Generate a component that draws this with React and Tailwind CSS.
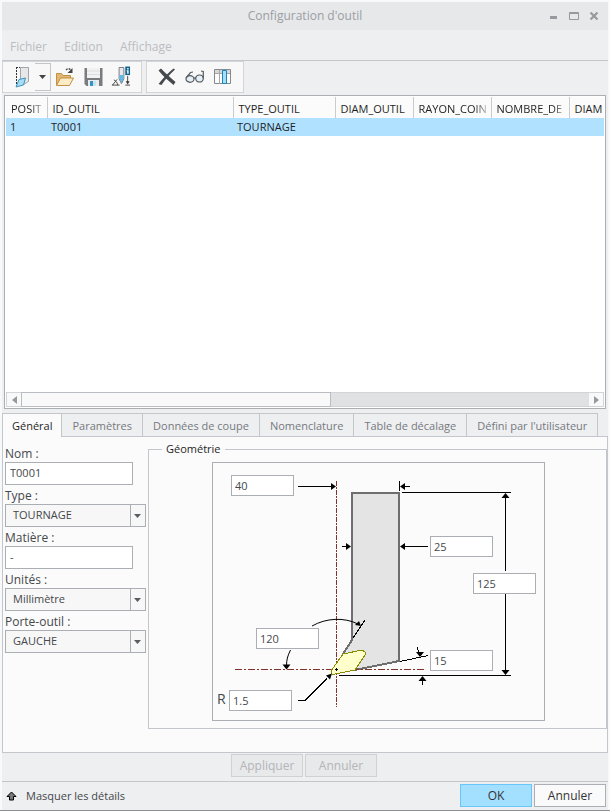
import { useState } from "react";

const MENUS = ["Fichier", "Edition", "Affichage"];

const COLUMNS = [
  { label: "POSIT", width: "w-[41px]", faded: true },
  { label: "ID_OUTIL", width: "w-[186px]" },
  { label: "TYPE_OUTIL", width: "w-[102px]" },
  { label: "DIAM_OUTIL", width: "w-[78px]" },
  { label: "RAYON_COIN", width: "w-[78px]", faded: true },
  { label: "NOMBRE_DE", width: "w-[78px]", faded: true },
  { label: "DIAM", width: "" },
];

const TOOLS = [["1", "T0001", "TOURNAGE", "", "", "", ""]];

const TABS = [
  "Général",
  "Paramètres",
  "Données de coupe",
  "Nomenclature",
  "Table de décalage",
  "Défini par l'utilisateur",
];

const DIMENSIONS = [
  { id: "offset", label: "Décalage", value: "40", place: "left-[18px] top-[12px]" },
  { id: "width", label: "Largeur", value: "25", place: "left-[217px] top-[73px]" },
  { id: "length", label: "Longueur", value: "125", place: "left-[260px] top-[110px]" },
  { id: "side", label: "Angle latéral", value: "120", place: "left-[43px] top-[165px]" },
  { id: "end", label: "Angle de face", value: "15", place: "left-[217px] top-[187px]" },
  { id: "radius", label: "Rayon", value: "1.5", place: "left-[16px] top-[227px]" },
];

function NewToolIcon() {
  return (
    <svg width="16" height="22" viewBox="0 0 16 22" fill="none">
      <path d="M5.500 1.500h8v14l-5 3-3-1z" fill="#e6e7e8" stroke="#a2a5a8" />
      <path d="M1.500 1v19M1 1.500h4" stroke="#333" strokeDasharray="2 1" />
      <path d="M4 13.500l6.500-1.500-2 7-7.500 2z" fill="#a9dcf5" stroke="#3a93bd" />
    </svg>
  );
}

function OpenIcon() {
  return (
    <svg width="20" height="20" viewBox="0 0 20 20" fill="none">
      <path d="M1.500 18V6.500h5l1.500 2h7.500V11" fill="#e0b873" stroke="#c29143" />
      <path d="M1.500 18.500l4-7.500h13l-4 7.500z" fill="#fdebc6" stroke="#c29143" />
      <path d="M11 3c2-2 4-1.500 5 .5" stroke="#444" strokeWidth="1.300" strokeDasharray="2 1" />
      <path d="M17.500 1v5h-5z" fill="#444" />
    </svg>
  );
}

function SaveIcon() {
  return (
    <svg width="19" height="20" viewBox="0 0 19 20" fill="none">
      <path d="M.5 1h18v18h-16l-2-2z" fill="#797b7e" />
      <path d="M3 1h13v10H3z" fill="#f1f2f2" />
      <path d="M3 4h13M3 7.500h13" stroke="#dcdddf" />
      <path d="M4 13h11v6H4z" fill="#e9edf0" />
      <path d="M6 14h3v5H6z" fill="#3b93bb" />
      <path d="M9 14h3v5H9z" fill="#c4e5f4" />
    </svg>
  );
}

function ProbeIcon() {
  return (
    <svg width="21" height="22" viewBox="0 0 21 22" fill="none">
      <path d="M8.500 1v12l2.500 5 2.500-5V1z" fill="#e6e8ea" stroke="#74787c" />
      <path d="M9 9h4v4l-2 4-2-4z" fill="#59bbe6" />
      <path d="M15 0h5v9h-5z" fill="#12638c" />
      <path d="M17 1.500h1.500V3H17zM16.500 4h2v3.500H17V5h-.5z" fill="#fff" />
      <path d="M17.500 10v7M15 19.500h5M1 19.500h8M1.500 19.500l5-6M3 14c2 1 4 3 4 5.500" stroke="#444" />
      <path d="M15.500 15.500h4l-2 3.500z" fill="#333" />
    </svg>
  );
}

function DeleteIcon() {
  return (
    <svg width="18" height="18" viewBox="0 0 18 18" fill="none">
      <path d="M.5 2.500L3 .5c4 4 9 9 14.500 13.500L15.500 17C10 12.500 5 8 .5 2.500z" fill="#46494c" />
      <path d="M15.500.5l1.500 1C11.500 6.500 7.500 11 3.500 17l-3-1C5 10 10 5 15.500.5z" fill="#46494c" />
    </svg>
  );
}

function GlassesIcon() {
  return (
    <svg width="20" height="14" viewBox="0 0 20 14" fill="none" stroke="#55585b" strokeWidth="1.200">
      <ellipse cx="5" cy="9" rx="4" ry="3.300" fill="#e3f1f7" />
      <ellipse cx="14.500" cy="8.500" rx="3.800" ry="3.500" fill="#e3f1f7" />
      <path d="M8.800 8.500c.5-1 1.300-1 2 0M1 8l4.500-5.500 2.500-.5M18.300 8V1.500L16 1" />
    </svg>
  );
}

function ColumnsIcon() {
  return (
    <svg width="18" height="16" viewBox="0 0 18 16" fill="none">
      <path d="M.5.5h16v14H.5z" fill="#fff" stroke="#85888c" />
      <path d="M1 2.500h15" stroke="#d5d7d9" strokeWidth="3" />
      <path d="M5.500 1v14M1 4.500h15" stroke="#a4a7aa" />
      <path d="M8.500 1.500h4v13h-4z" fill="#a4def8" stroke="#1c86b7" />
    </svg>
  );
}

function IconButton({ label, className = "", children }) {
  return (
    <button type="button" aria-label={label} className={`flex h-7 items-center justify-center ${className}`}>
      {children}
    </button>
  );
}

function TitleBar() {
  return (
    <header className="flex h-7 items-center justify-end bg-[#e6e8ea] text-[#9b9ea2]">
      <h1 className="flex-1 pl-[62px] text-center">Configuration d'outil</h1>
      <div className="flex gap-1 pr-1.5">
        <button type="button" aria-label="Réduire" className="flex h-4 w-4 items-center justify-center">
          <svg width="10" height="10" viewBox="0 0 10 10"><path d="M1 5h7v3H1z" fill="#96999d" /></svg>
        </button>
        <button type="button" aria-label="Agrandir" className="flex h-4 w-4 items-center justify-center">
          <svg width="10" height="8" viewBox="0 0 10 8"><path d="M.5.5h9v7h-9zM0 1.500h10" fill="none" stroke="#96999d" /></svg>
        </button>
        <button type="button" aria-label="Fermer" className="flex h-4 w-4 items-center justify-center">
          <svg width="8" height="8" viewBox="0 0 8 8"><path d="M.5.5l7 7M7.500.5l-7 7" stroke="#96999d" strokeWidth="2.200" /></svg>
        </button>
      </div>
    </header>
  );
}

function Toolbar() {
  return (
    <div className="flex gap-1">
      <div className="flex h-8 w-[140px] items-center border border-[#d2d4d6] bg-[#f8f8f8] pl-3">
        <IconButton label="Nouvel outil" className="w-4">
          <NewToolIcon />
        </IconButton>
        <IconButton label="Types d'outil" className="ml-1 w-4 border border-l-0 border-[#c3c6c9]">
          <svg width="7" height="4" viewBox="0 0 7 4"><path d="M0 0h7L3.500 4z" fill="#444" /></svg>
        </IconButton>
        <IconButton label="Ouvrir" className="ml-1 w-5">
          <OpenIcon />
        </IconButton>
        <IconButton label="Enregistrer" className="ml-2 w-5">
          <SaveIcon />
        </IconButton>
        <IconButton label="Informations" className="ml-2 w-5">
          <ProbeIcon />
        </IconButton>
      </div>
      <div className="flex h-8 w-[98px] items-center gap-2 border border-[#d2d4d6] bg-[#f8f8f8] pl-2.5">
        <IconButton label="Supprimer" className="w-5">
          <DeleteIcon />
        </IconButton>
        <IconButton label="Aperçu" className="w-5">
          <GlassesIcon />
        </IconButton>
        <IconButton label="Colonnes" className="w-5">
          <ColumnsIcon />
        </IconButton>
      </div>
    </div>
  );
}

function ToolTable() {
  return (
    <div className="mx-0.5 mt-0.5 flex min-h-[314px] flex-1 flex-col border border-[#abaeb2] bg-white p-px text-[11px]">
      <div className="flex-1">
        <table className="w-full table-fixed border-collapse">
          <thead>
            <tr className="h-[21px] bg-[#fbfbfb] text-left text-[#1f1f1f]">
              {COLUMNS.map((col) => (
                <th
                  key={col.label}
                  scope="col"
                  className={`${col.width} border-r border-[#c9cccf] pl-[5px] pt-0.5 font-normal whitespace-nowrap last:border-r-0`}
                >
                  <span
                    className={
                      col.faded
                        ? "block [mask-image:linear-gradient(to_right,black_calc(100%-16px),transparent)]"
                        : "block"
                    }
                  >
                    {col.label}
                  </span>
                </th>
              ))}
            </tr>
          </thead>
          <tbody>
            {TOOLS.map((row) => (
              <tr key={row[1]} className="h-[18px] bg-[#b0e2ff] text-[#1f1f1f]">
                {row.map((cell, i) => (
                  <td key={i} className="py-0 pl-1 leading-4">{cell}</td>
                ))}
              </tr>
            ))}
          </tbody>
        </table>
      </div>
      <div className="flex h-[15px] border border-[#d2d4d6] bg-[#dfe1e3]">
        <button type="button" aria-label="Défiler à gauche" className="flex w-[14px] items-center justify-center bg-[#f9f9f9]">
          <svg width="5" height="8" viewBox="0 0 5 8"><path d="M5 0v8L0 4z" fill="#96999d" /></svg>
        </button>
        <div className="-my-px w-[52%] border border-[#b9bcc0] bg-[#f9f9f9]" />
        <button type="button" aria-label="Défiler à droite" className="ml-auto flex w-[14px] items-center justify-center bg-[#f9f9f9]">
          <svg width="5" height="8" viewBox="0 0 5 8"><path d="M0 0v8l5-4z" fill="#96999d" /></svg>
        </button>
      </div>
    </div>
  );
}

function TextField({ id, label, value }) {
  return (
    <div>
      <label htmlFor={id} className="block h-[19px] leading-[22px]">{label}</label>
      <input
        id={id}
        type="text"
        defaultValue={value}
        className="block h-[23px] w-32 border border-[#abaeb2] bg-white px-1 pb-0.5 text-[11px] outline-none"
      />
    </div>
  );
}

function SelectField({ id, label, value }) {
  return (
    <div>
      <label htmlFor={id} className="block h-[19px] leading-[22px]">{label}</label>
      <div className="relative">
        <select
          id={id}
          className="block h-[23px] w-full appearance-none border border-[#abaeb2] bg-[#f7f7f7] pb-0.5 pl-[7px] text-[11px] outline-none"
        >
          <option>{value}</option>
        </select>
        <span className="pointer-events-none absolute inset-y-0 right-0 flex w-4 items-center justify-center border border-[#abaeb2]">
          <svg width="8" height="4" viewBox="0 0 8 4"><path d="M0 0h7L3.500 4z" fill="#5a5d60" /></svg>
        </span>
      </div>
    </div>
  );
}

// Drawing units are pixels; every dimension box sits on its leader line.
function ToolDrawing() {
  return (
    <div className="relative h-[259px] w-[333px] border border-[#abaeb2]">
      <svg
        width="331"
        height="257"
        viewBox="213 463 331 257"
        fill="none"
        shapeRendering="crispEdges"
        className="absolute inset-0"
      >
        {/* Shank */}
        <path d="M352 493h47v168l-44 9-12-16 9-14z" fill="#e4e4e4" />
        <path d="M343 654l9-14V493h47v168l-44 9" stroke="#6e6e6e" strokeWidth="2" />

        {/* Axes */}
        <path d="M336.500 481v226" stroke="#85302a" strokeDasharray="5 1 2 1" />
        <path d="M235 669.500h190" stroke="#85302a" strokeDasharray="7 2 2 2" />

        {/* Insert */}
        <path
          d="M343 654l19-4 3 2v3l-10 15-20 4h-3l-1-3z"
          fill="#ffffcc"
          stroke="#8a8a00"
        />
        <path d="M336 668h1v3h-1zM335 669h3v1h-3z" fill="#000" />

        {/* Leader lines */}
        <g stroke="#000">
          <path d="M298 486.500h34M399.500 481v10M404 486.500h6" />
          <path d="M402 492.500h109M505.500 496v75M505.500 594v78M339 675.500h172" />
          <path d="M342 546.500h6M404 546.500h24" />
          <path d="M298 700.500h7l22-22" />
          <path d="M400 661.500l28-6" />
          <path d="M417 647l2 6M422.500 680v5" />
          <path d="M353 638l12-18" />
          <path d="M312 626c14-8 32-9 46-2M290.500 650c-3 6-4 10-4 16" shapeRendering="auto" />
        </g>

        {/* Arrow heads */}
        <g fill="#000" shapeRendering="auto">
          <path d="M336 486.500l-5-3.500v7zM400 486.500l5-3.500v7z" />
          <path d="M351 546.500l-5-3.500v7zM400 546.500l5-3.500v7z" />
          <path d="M505.500 493l4 5h-8zM505.500 675l4-5h-8z" />
          <path d="M286.500 669.500l4-5h-8zM361 626l-2-5-4 4z" />
          <path d="M332 673.500l-2 6-4-4zM420 657l4-5h-8zM422.500 676l4 5h-8z" />
        </g>
      </svg>

      {DIMENSIONS.map((dim) => (
        <input
          key={dim.id}
          type="text"
          aria-label={dim.label}
          defaultValue={dim.value}
          className={`absolute h-[21px] w-[63px] border border-[#abaeb2] bg-white px-[3px] text-[11px] outline-none ${dim.place}`}
        />
      ))}
      <span className="absolute left-1 top-[226px] text-sm leading-5">R</span>
    </div>
  );
}

function GeneralPanel() {
  return (
    <div className="-mt-px flex border border-[#c3c6ca] bg-[#fbfbfb] pb-[23px] pl-0.5 pt-1.5 text-[#45484b]">
      <div className="w-[141px]">
        <TextField id="nom" label="Nom :" value="T0001" />
        <SelectField id="type" label="Type :" value="TOURNAGE" />
        <TextField id="matiere" label="Matière :" value="-" />
        <SelectField id="unites" label="Unités :" value="Millimètre" />
        <SelectField id="porte-outil" label="Porte-outil :" value="GAUCHE" />
      </div>
      <fieldset className="ml-0.5 min-w-0 flex-1 border border-[#c3c6ca] pb-[7px]">
        <legend className="ml-[13px] px-1 text-[11px] leading-3 text-[#1f1f1f]">Géométrie</legend>
        <div className="flex justify-center pl-0.5 pt-[7px]">
          <ToolDrawing />
        </div>
      </fieldset>
    </div>
  );
}

export default function App() {
  const [tab, setTab] = useState(0);

  return (
    <div className="flex min-h-screen flex-col border-b border-[#8d9093] bg-[#eeeff1] font-['Open_Sans',sans-serif] text-[12px] leading-4 text-[#45484b]">
      <div className="flex flex-1 flex-col border-2 border-b-0 border-[#f8f9fa]">
        <TitleBar />

        <nav className="flex h-[31px] items-center gap-[17px] border-b border-[#c3c6ca] pl-2 pt-1 text-[#bbbdc0]">
          {MENUS.map((menu) => (
            <button key={menu} type="button">{menu}</button>
          ))}
        </nav>

        <Toolbar />
        <ToolTable />

        <div className="mt-1 flex text-[11px]" role="tablist">
          {TABS.map((name, i) => (
            <button
              key={name}
              type="button"
              role="tab"
              aria-selected={tab === i}
              onClick={() => setTab(i)}
              className={`h-6 whitespace-nowrap border-r border-t border-[#c3c6ca] ${
                tab === i ? "relative border-l bg-[#fbfbfb] px-[9px] text-[#1f1f1f]" : "px-2.5 text-[#76797d]"
              }`}
            >
              {name}
            </button>
          ))}
        </div>
        <GeneralPanel />

        <div className="flex justify-center gap-0.5 border-b border-[#c3c6ca] pb-1 pr-0.5 pt-px">
          <button type="button" disabled className="h-[23px] w-18 border border-[#cfd1d3] bg-[#e8e9eb] text-[#b3b5b8]">
            Appliquer
          </button>
          <button type="button" disabled className="h-[23px] w-18 border border-[#cfd1d3] bg-[#e8e9eb] text-[#b3b5b8]">
            Annuler
          </button>
        </div>

        <footer className="flex items-center gap-0.5 pb-[3px] pt-0.5">
          <button type="button" className="mr-auto flex items-center gap-2 pl-1 text-[11px]">
            <svg width="12" height="10" viewBox="0 0 12 10">
              <path d="M5.500 1l4.500 4.500H7.500V9h-4V5.500H1z" fill="#777" stroke="#000" />
            </svg>
            Masquer les détails
          </button>
          <button type="button" className="h-[23px] w-18 border border-[#69c6fa] bg-[#a3dfff] text-[#333]">OK</button>
          <button type="button" className="mr-0.5 h-[23px] w-18 border border-[#abaeb2] bg-[#fafafa] text-[#333]">Annuler</button>
        </footer>
      </div>
    </div>
  );
}
